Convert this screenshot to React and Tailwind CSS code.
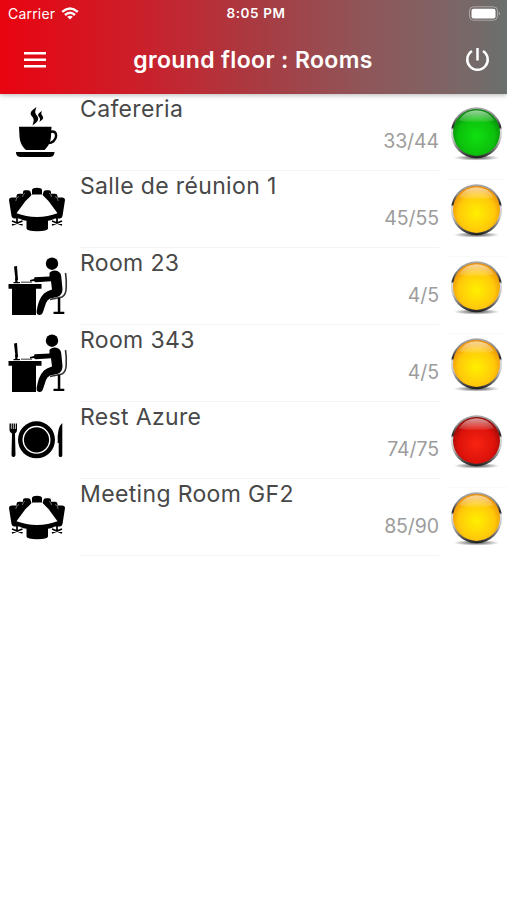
import React from 'react';

const rooms = [
    { name: 'Cafereria', count: '33/44', icon: 'cup', status: 'green' },
    { name: 'Salle de réunion 1', count: '45/55', icon: 'meeting', status: 'yellow' },
    { name: 'Room 23', count: '4/5', icon: 'desk', status: 'yellow' },
    { name: 'Room 343', count: '4/5', icon: 'desk', status: 'yellow' },
    { name: 'Rest Azure', count: '74/75', icon: 'plate', status: 'red' },
    { name: 'Meeting Room GF2', count: '85/90', icon: 'meeting', status: 'yellow' },
];

// center, middle and edge colour of each ball
const lights = {
    green: ['#10e010', '#0cc00c', '#087a0c'],
    yellow: ['#fff000', '#ffc80a', '#e88408'],
    red: ['#f82412', '#dc120a', '#8a0808'],
};

const CupIcon = () => (
    <>
        <path d="M19 33.3H51.5L51 43C50.5 49 48 53 44.5 56.5H26C22 53 20 49 19.5 43Z" transform="translate(0 -.5)" />
        <path d="M50 38C54 36.5 56.3 38.5 56.1 42C55.7 46.500 52 49 48.500 49" fill="none" stroke="#000" strokeWidth="2.500" />
        <path d="M16 58H54.500C54.500 61.700 52 63 49 63H21.500C18 63 16 61.700 16 58Z" />
        <path d="M36.500 13C29 18 30 20 32.500 23C34.500 26 33.500 28 32.500 31.500C40.500 26 38.500 23.500 36 20.500C34.500 18 35.500 16 36.500 13Z" />
        <path d="M42 17C37 20 37.500 21.500 39.500 23.500C40.500 25 40 26.500 39 28C44 25 43.800 23.500 42.200 21.500C41 20 41.200 19 42 17Z" />
    </>
);

const MeetingIcon = () => (
    <>
        <path d="M32 24V19C32 16 42 16 42 19V24Z" />
        <path d="M23 26V21Q23 19.200 25 19.200H28Q30.500 19.200 30.800 22L31.500 24L27 30Z" />
        <path d="M51 26V21Q51 19.200 49 19.200H46Q43.500 19.200 43.200 22L42.500 24L47 30Z" />
        <path d="M16.500 30V25Q16.500 22.800 19 22.800H23Q26 22.800 26.500 26L27.500 29L20 40Z" />
        <path d="M57.500 30V25Q57.500 22.800 55 22.800H51Q48 22.800 47.500 26L46.500 29L54 40Z" />
        <path d="M9 29Q9 26.500 12 26.500H17Q20.500 27 21 30L22.500 34L17 43L20 47.500H14Q12 47 11.500 45Z" />
        <path d="M65 29Q65 26.500 62 26.500H57Q53.500 27 53 30L51.500 34L57 43L54 47.500H60Q62 47 62.500 45Z" />
        <path d="M16.500 42H57.500V45Q54 49 48 49.800V57.500Q47.500 60.300 37.200 60.300Q27 60.300 26.500 57.500V49.800Q20 49 16.500 45Z" />
        <path d="M32.500 23.500H42L48.500 30L57.500 42.300Q48 46 37 46Q26 46 16.500 42.300L25.500 30Z" fill="#fff" />
        <path d="M17 46V53M12 50L22.500 54M22.500 50L12 54M57 46V53M52 50L62 54M62 50L52 54" fill="none" stroke="#000" strokeWidth="1.700" />
        <path d="M15.800 30Q16 26 19 25.500M22.500 26Q23 22.500 25 22M58.200 30Q58 26 55 25.500M51.500 26Q51 22.500 49 22" fill="none" stroke="#999" strokeWidth=".7" />
    </>
);

const DeskIcon = () => (
    <>
        <circle cx="52" cy="15.700" r="6.200" />
        <path d="M8.500 36H41.500V40.800H36V67H12V40.800H8.500Z" />
        <path d="M14 18.500L17 18L18 32H15.500Z" />
        <path d="M15.200 30H17.500V34H20V35.200H13.500V34H15.200Z" />
        <path d="M21 33.500H32V35H21Z" fill="#777" />
        <path d="M34.500 29.300L49.500 28.500V25Q51 22.500 55 22.500Q60.500 23 61.200 28L62.500 41Q62.500 47.500 57 49L50 50.500Q47 52 46 55L43 64Q42 67.300 39.200 67Q36 66.500 36.700 62.500Q38.500 51 44 45.500Q47 43 52 41.500L51 33.200L36 34.200Q34.300 34 34 33L30 33.500V32L34 31Z" />
        <path d="M65.500 25Q66.700 32 66.200 40Q66 47 62 49L50 51.500" fill="none" stroke="#333" strokeWidth="1.600" />
        <path d="M57.800 50H60.300V63.800H64.300V66H53.500V63.800H57.800Z" />
    </>
);

const PlateIcon = () => (
    <>
        <circle cx="36.500" cy="37.800" r="18.500" />
        <circle cx="36.500" cy="37.800" r="13.300" fill="none" stroke="#fff" strokeWidth="1.400" />
        <path d="M9.500 21.500H10.900V27H11.600V21.500H12.900V27H13.600V21.500H14.900V27H15.700V21.500H17V28Q17 30.500 15 31.500L15.500 53Q15.300 55 13.500 55Q11.500 55 11.500 53L12 31.500Q9.500 30.500 9.500 28Z" />
        <path d="M62.300 21V53.500Q62.300 55 60.500 55Q58.700 55 58.700 53.500V41H57.700Q57 25 62.300 21Z" />
    </>
);

const icons = { cup: CupIcon, meeting: MeetingIcon, desk: DeskIcon, plate: PlateIcon };

const StatusLight = ({ id, status }) => {
    const [light, mid, dark] = lights[status];
    return (
        <svg className="h-[77px] w-[68px] shrink-0" viewBox="0 0 68 77">
            <defs>
                <radialGradient id={`ball-${id}`} cx=".5" cy=".58" r=".6">
                    <stop offset="0" stopColor={light} />
                    <stop offset=".65" stopColor={mid} />
                    <stop offset="1" stopColor={dark} />
                </radialGradient>
                <linearGradient id={`ring-${id}`} x1="0" y1="0" x2="0" y2="1">
                    <stop offset="0" stopColor="#aaa" />
                    <stop offset=".2" stopColor="#888" />
                    <stop offset=".39" stopColor="#222" />
                    <stop offset=".44" stopColor="#ddd" />
                    <stop offset=".65" stopColor="#c4c4c4" />
                    <stop offset=".85" stopColor="#666" />
                    <stop offset="1" stopColor="#1a1a1a" />
                </linearGradient>
                <linearGradient id={`gloss-${id}`} x1="0" y1="0" x2="0" y2="1">
                    <stop offset="0" stopColor="#fff" stopOpacity=".6" />
                    <stop offset="1" stopColor="#fff" stopOpacity=".08" />
                </linearGradient>
                <radialGradient id={`shadow-${id}`}>
                    <stop offset="0" stopColor="#000" stopOpacity=".7" />
                    <stop offset="1" stopColor="#000" stopOpacity="0" />
                </radialGradient>
            </defs>
            {status === 'yellow' && <path d="M9 8.500H68" stroke="#f9f9f9" />}
            <ellipse cx="37.500" cy="63.800" rx="23" ry="2.800" fill={`url(#shadow-${id})`} />
            <circle cx="37.500" cy="38.800" r="25.500" fill={`url(#ring-${id})`} />
            <circle cx="37.500" cy="38.400" r="23.500" fill={`url(#ball-${id})`} />
            <path d="M19.500 26.500Q26 16.200 37.500 16.200Q49 16.200 55.500 26.500Q37.500 29.500 19.500 26.500Z" fill={`url(#gloss-${id})`} />
        </svg>
    );
};

const RoomRow = ({ room, id }) => {
    const Icon = icons[room.icon];
    return (
        <li className="flex h-[77px]">
            <svg className="h-[77px] w-20 shrink-0" viewBox="0 0 80 77">
                <Icon />
            </svg>
            <div className="flex w-[359px] flex-col border-b border-[#f3f3f3]">
                <span className="h-[30px] text-[23px] leading-[30px] tracking-[0.35px] text-[#484848]">{room.name}</span>
                <span className="mt-[3px] self-end text-[19.5px] leading-[28px] tracking-[-0.1px] text-[#9c9c9c]">{room.count}</span>
            </div>
            <StatusLight id={id} status={room.status} />
        </li>
    );
};

const StatusBar = () => (
    <div className="grid h-[27px] grid-cols-3 items-center pl-2 pr-[6px] text-[14px]">
        <div className="flex items-center gap-[6px] tracking-[0.2px]">
            <span>Carrier</span>
            <svg className="h-[13px] w-[18px]" viewBox="0 0 18 13" fill="none" stroke="#fff" strokeWidth="2.400">
                <path d="M1.200 4.800Q9-1.800 16.800 4.800M4 8Q9 3.500 14 8" />
                <path d="M6.200 9.800Q9 7.500 11.800 9.800L9 12.600Z" fill="#fff" stroke="none" />
            </svg>
        </div>
        <span className="pl-[3px] text-center text-[13.5px] font-semibold tracking-[0.6px]">8:05 PM</span>
        <svg className="h-[15px] w-[33px] justify-self-end" viewBox="0 0 33 15">
            <rect x="1.500" y=".8" width="28" height="13.400" rx="4" fill="none" stroke="#fff" strokeOpacity=".4" />
            <rect x="3.500" y="2.800" width="24" height="9.600" rx="2" fill="#fff" />
            <path d="M30.800 5.500Q33 7.500 30.800 9.500Z" fill="#fff" fillOpacity=".5" />
        </svg>
    </div>
);

const App = () => (
    <div className="min-h-[900px] w-[507px] bg-white font-['Inter',sans-serif]">
        <header className="h-[94px] bg-[linear-gradient(to_right,#e90410_0%,#c8222d_30%,#a73c43_52%,#8f5659_72%,#7f6465_88%,#6a706d_100%)] text-white shadow-[0_1px_5px_rgba(0,0,0,0.3)]">
            <StatusBar />
            <div className="flex h-[65px] items-center justify-between pl-6 pr-[17px]">
                <button aria-label="Menu">
                    <svg className="h-[16px] w-[22px]" viewBox="0 0 22 16" fill="#fff">
                        <path d="M0 0H22V2.500H0ZM0 6.500H22V9H0ZM0 13H22V15.500H0Z" />
                    </svg>
                </button>
                <h1 className="mr-[5px] pt-px text-[23px] font-semibold tracking-[0.35px]">ground floor : Rooms</h1>
                <button aria-label="Log out">
                    <svg className="size-[25px]" viewBox="0 0 25 25" fill="none" stroke="#fff" strokeWidth="2.500">
                        <path d="M12.500 1V13.500M7 4A10.200 10.200 0 1 0 18 4" />
                    </svg>
                </button>
            </div>
        </header>
        <ul>
            {rooms.map((room, i) => (
                <RoomRow key={room.name} room={room} id={i} />
            ))}
        </ul>
    </div>
);

export default App;
